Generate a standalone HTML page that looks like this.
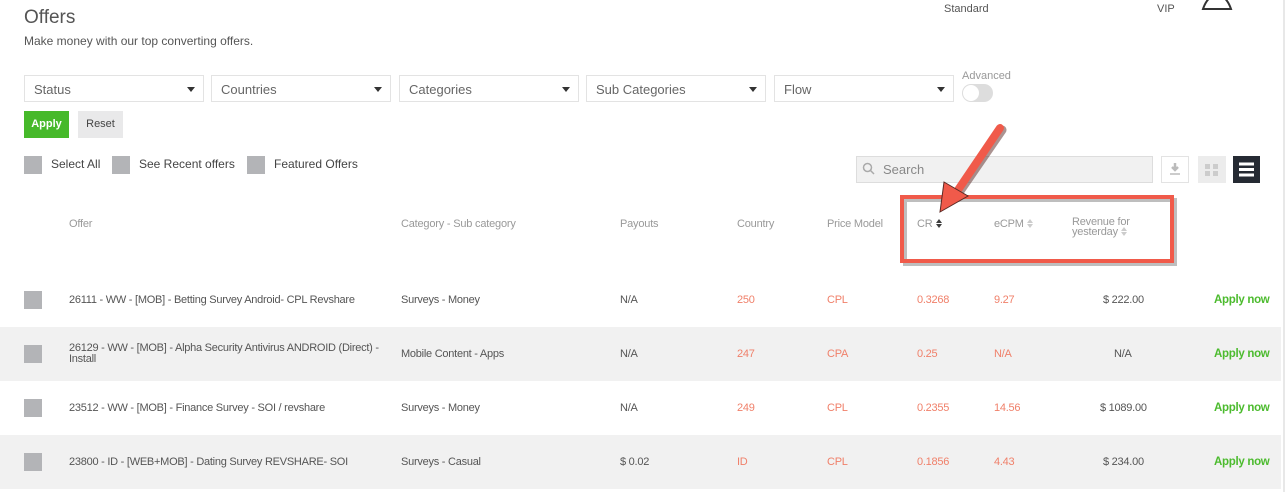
<!DOCTYPE html>
<html><head><style>
*{box-sizing:border-box;margin:0;padding:0}
body{width:1288px;height:492px;overflow:hidden;background:#fff;font-family:"Liberation Sans",sans-serif;color:#555;position:relative}
.a{position:absolute;white-space:nowrap}
.sel{position:absolute;top:75px;height:27px;border:1px solid #e3e3e3;font-size:13px;color:#666;padding:6px 9px}
.sel:after{content:"";position:absolute;right:8px;top:11px;border:4px solid transparent;border-top:5px solid #333}
.cb{position:absolute;width:18px;height:18px;background:#b3b4b7}
.row{position:absolute;left:0;width:1281px;height:54px;font-size:11px;color:#555;letter-spacing:-0.25px}
.row .a{top:50%;transform:translateY(-50%)}
.g{background:#f1f1f1}
.r{color:#f0806a}
.ap{color:#4cbb2e;font-weight:bold;font-size:11.5px;letter-spacing:-0.3px}
.h{font-size:11px;color:#999;top:218px;letter-spacing:-0.2px}
.s{display:inline-block;width:6px;height:9px;vertical-align:-1px;margin-left:3px;position:relative}
.s:before{content:"";position:absolute;left:0;top:0;border:3px solid transparent;border-bottom:4px solid #ccc;border-top:0}
.s:after{content:"";position:absolute;left:0;top:5px;border:3px solid transparent;border-top:4px solid #ccc;border-bottom:0}
</style></head><body>
<div style="position:absolute;left:1283px;top:0;width:2px;height:492px;background:#e8e8e8"></div>
<div class="a" style="left:24px;top:7px;font-size:19px;color:#555">Offers</div>
<div class="a" style="left:24px;top:34px;font-size:12px;color:#555">Make money with our top converting offers.</div>
<div class="a" style="left:944px;top:3px;font-size:11px;color:#555">Standard</div>
<div class="a" style="left:1157px;top:3px;font-size:11px;color:#555">VIP</div>
<svg class="a" style="left:1200px;top:0" width="36" height="12"><path d="M3 9 Q6 0 12 -4 L22 -4 Q28 0 31 9 Z" fill="none" stroke="#333" stroke-width="2"/></svg>
<div class="sel" style="left:24px;width:180px">Status</div>
<div class="sel" style="left:211px;width:180px">Countries</div>
<div class="sel" style="left:399px;width:180px">Categories</div>
<div class="sel" style="left:586px;width:180px">Sub Categories</div>
<div class="sel" style="left:774px;width:180px">Flow</div>
<div class="a" style="left:962px;top:70px;font-size:11px;color:#999">Advanced</div>
<div class="a" style="left:962px;top:84px;width:31px;height:18px;border-radius:9px;background:#ddd"><div style="position:absolute;left:1px;top:1px;width:16px;height:16px;border-radius:50%;background:#fff"></div></div>
<div class="a" style="left:24px;top:111px;width:45px;height:27px;background:#46b92a;color:#fff;font-size:11px;font-weight:bold;text-align:center;line-height:27px">Apply</div>
<div class="a" style="left:78px;top:111px;width:45px;height:27px;background:#e9e9ea;color:#444;font-size:11px;text-align:center;line-height:27px">Reset</div>
<div class="cb" style="left:24px;top:156px"></div><div class="a" style="left:51px;top:157px;font-size:12px;color:#444">Select All</div>
<div class="cb" style="left:112px;top:156px"></div><div class="a" style="left:139px;top:157px;font-size:12px;color:#444">See Recent offers</div>
<div class="cb" style="left:247px;top:156px"></div><div class="a" style="left:274px;top:157px;font-size:12px;color:#444">Featured Offers</div>
<div class="a" style="left:856px;top:156px;width:297px;height:27px;background:#f1f1f1;border:1px solid #ddd;font-size:13px;color:#888;padding:5px 0 0 26px">Search</div>
<svg class="a" style="left:862px;top:162px" width="14" height="14"><circle cx="5.5" cy="5.5" r="4" fill="none" stroke="#aaa" stroke-width="1.5"/><path d="M8.5 8.5 L12 12" stroke="#aaa" stroke-width="1.5"/></svg>
<div class="a" style="left:1161px;top:156px;width:28px;height:27px;border:1px solid #e3e3e3"></div>
<svg class="a" style="left:1168px;top:162px" width="14" height="14"><path d="M7 1 V8 M4 5 L7 8 L10 5" stroke="#bbb" stroke-width="2.5" fill="none"/><path d="M2 12 H12" stroke="#bbb" stroke-width="1.5"/></svg>
<div class="a" style="left:1198px;top:156px;width:28px;height:27px;background:#ececec"></div>
<svg class="a" style="left:1202px;top:160px" width="20" height="20"><rect x="3" y="4" width="5" height="5" fill="#ccc"/><rect x="11" y="4" width="5" height="5" fill="#ccc"/><rect x="3" y="11" width="5" height="5" fill="#ccc"/><rect x="11" y="11" width="5" height="5" fill="#ccc"/></svg>
<div class="a" style="left:1233px;top:156px;width:27px;height:27px;background:#252a33"></div>
<svg class="a" style="left:1233px;top:156px" width="27" height="27"><path d="M6 8 H21 M6 13.5 H21 M6 19 H21" stroke="#fff" stroke-width="3"/></svg>
<div class="a h" style="left:69px">Offer</div>
<div class="a h" style="left:401px">Category - Sub category</div>
<div class="a h" style="left:620px">Payouts</div>
<div class="a h" style="left:737px">Country</div>
<div class="a h" style="left:827px">Price Model</div>
<div class="a h" style="left:917px">CR<span class="s" style="filter:brightness(0.3)"></span></div>
<div class="a h" style="left:994px">eCPM<span class="s"></span></div>
<div class="a h" style="left:1072px;line-height:9px;top:218px">Revenue for<br>yesterday<span class="s"></span></div>
<svg class="a" style="left:890px;top:120px" width="300" height="155">
<rect x="13" y="78" width="270" height="64" fill="none" stroke="#444" stroke-width="4" opacity=".35" transform="translate(2,2)"/>
<rect x="12" y="77" width="270" height="64" fill="none" stroke="#f05a4a" stroke-width="4"/>
<path d="M110 8 L66 72" stroke="#5a2a25" stroke-width="9" stroke-linecap="round" opacity=".5" transform="translate(2,2)"/>
<path d="M110 8 L68 70" stroke="#f05a4a" stroke-width="8" stroke-linecap="round"/>
<path d="M50 92 L54 62 L78 76 Z" fill="#f05a4a" stroke="#5a2a25" stroke-width="1"/>
</svg>
<div class="row" style="top:273px">
<div class="cb" style="left:24px;top:18px"></div>
<div class="a" style="left:69px">26111 - WW - [MOB] - Betting Survey Android- CPL Revshare</div>
<div class="a" style="left:401px">Surveys - Money</div><div class="a" style="left:620px">N/A</div>
<div class="a r" style="left:737px">250</div><div class="a r" style="left:827px">CPL</div><div class="a r" style="left:917px">0.3268</div><div class="a r" style="left:994px">9.27</div>
<div class="a" style="left:1103px">$ 222.00</div><div class="a ap" style="left:1214px">Apply now</div></div>
<div class="row g" style="top:327px">
<div class="cb" style="left:24px;top:18px"></div>
<div class="a" style="left:69px;line-height:11px">26129 - WW - [MOB] - Alpha Security Antivirus ANDROID (Direct) -<br>Install</div>
<div class="a" style="left:401px">Mobile Content - Apps</div><div class="a" style="left:620px">N/A</div>
<div class="a r" style="left:737px">247</div><div class="a r" style="left:827px">CPA</div><div class="a r" style="left:917px">0.25</div><div class="a r" style="left:994px">N/A</div>
<div class="a" style="left:1114px">N/A</div><div class="a ap" style="left:1214px">Apply now</div></div>
<div class="row" style="top:381px">
<div class="cb" style="left:24px;top:18px"></div>
<div class="a" style="left:69px">23512 - WW - [MOB] - Finance Survey - SOI / revshare</div>
<div class="a" style="left:401px">Surveys - Money</div><div class="a" style="left:620px">N/A</div>
<div class="a r" style="left:737px">249</div><div class="a r" style="left:827px">CPL</div><div class="a r" style="left:917px">0.2355</div><div class="a r" style="left:994px">14.56</div>
<div class="a" style="left:1100px">$ 1089.00</div><div class="a ap" style="left:1214px">Apply now</div></div>
<div class="row g" style="top:435px">
<div class="cb" style="left:24px;top:18px"></div>
<div class="a" style="left:69px">23800 - ID - [WEB+MOB] - Dating Survey REVSHARE- SOI</div>
<div class="a" style="left:401px">Surveys - Casual</div><div class="a" style="left:620px">$ 0.02</div>
<div class="a r" style="left:737px">ID</div><div class="a r" style="left:827px">CPL</div><div class="a r" style="left:917px">0.1856</div><div class="a r" style="left:994px">4.43</div>
<div class="a" style="left:1103px">$ 234.00</div><div class="a ap" style="left:1214px">Apply now</div></div>
</body></html>
